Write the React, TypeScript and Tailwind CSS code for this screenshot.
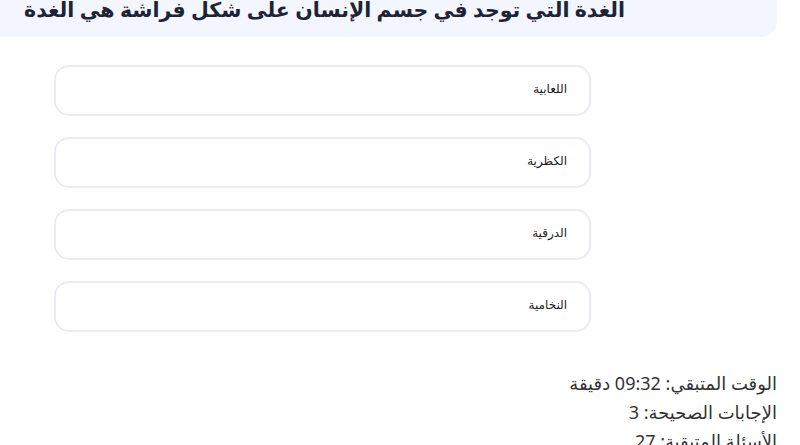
const options = ['اللعابية', 'الكظرية', 'الدرقية', 'النخامية'];

export default function App() {
  return (
    <div className="w-[800px] h-[445px] overflow-hidden bg-white">
      <div dir="rtl" className="w-[777px]">
        {/* Question header */}
        <div className="h-[40px] bg-[#f3f6fe] rounded-br-[16px] pr-[152px]">
          <h1
            className="text-[20.5px] font-bold leading-[24px] -mt-[3px] text-[#1e2433]"
            style={{ fontFamily: '"Noto Sans", "DejaVu Sans", sans-serif' }}
          >
            الغدة التي توجد في جسم الإنسان على شكل فراشة هي الغدة
          </h1>
        </div>

        {/* Answer options */}
        <div className="mt-[28px] mr-[186px] w-[537px] flex flex-col gap-[21px]">
          {options.map((o) => (
            <button
              key={o}
              className="h-[51px] w-full rounded-[15px] border-2 border-[#e8ecf2] bg-white pr-[22px] pl-6 pb-[3px] text-right text-[12px] font-medium text-[#1a1a1a]"
              style={{ fontFamily: '"DejaVu Sans", sans-serif' }}
            >
              {o}
            </button>
          ))}
        </div>

        {/* Stats */}
        <div
          className="mt-[37px] flex flex-col text-[18px] leading-[29px] text-[#333]"
          style={{ fontFamily: '"Noto Sans", "DejaVu Sans", sans-serif' }}
        >
          <p>الوقت المتبقي: 09:32 دقيقة</p>
          <p>الإجابات الصحيحة: 3</p>
          <p>الأسئلة المتبقية: 27</p>
        </div>
      </div>
    </div>
  );
}
